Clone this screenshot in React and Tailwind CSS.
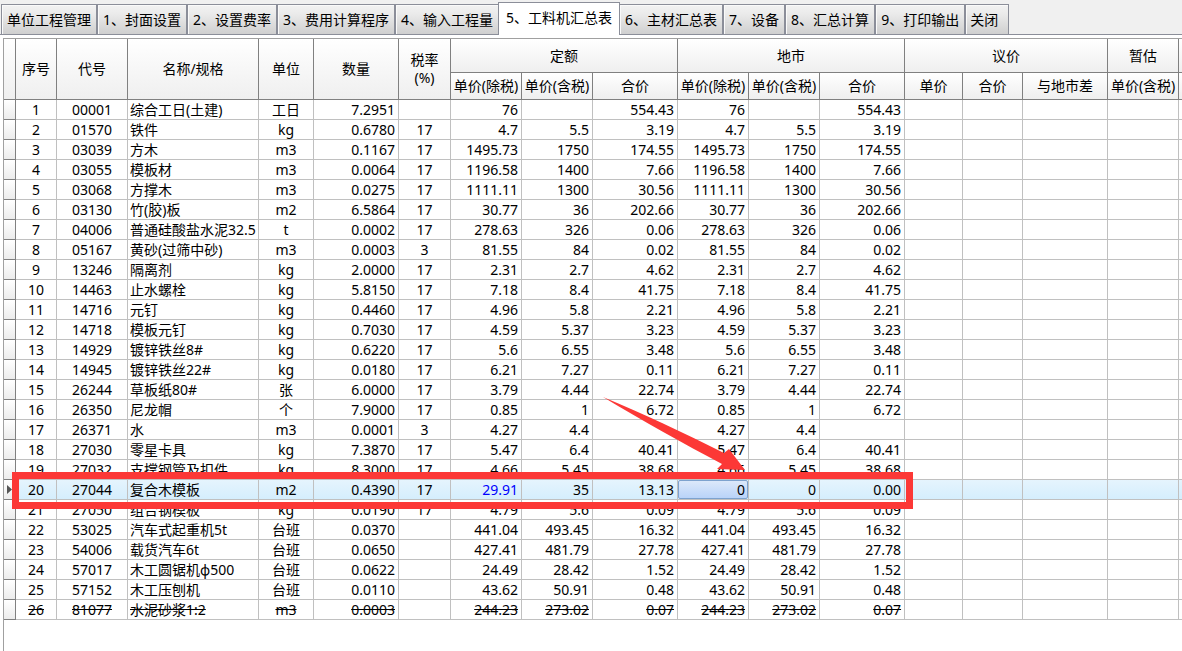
import clsx from "clsx";

const tabs = [
    "单位工程管理",
    "1、封面设置",
    "2、设置费率",
    "3、费用计算程序",
    "4、输入工程量",
    "5、工料机汇总表",
    "6、主材汇总表",
    "7、设备",
    "8、汇总计算",
    "9、打印输出",
    "关闭",
];

const activeTab = "5、工料机汇总表";

const columns = [
    { key: "no", width: "w-[41px]", align: "text-center" },
    { key: "code", width: "w-[71px]", align: "text-center" },
    { key: "name", width: "w-[131px]", align: "text-left" },
    { key: "unit", width: "w-[55px]", align: "text-center" },
    { key: "qty", width: "w-[85px]", align: "text-right" },
    { key: "tax", width: "w-[52px]", align: "text-center" },
    { key: "quotaNet", width: "w-[71px]", align: "text-right" },
    { key: "quotaGross", width: "w-[71px]", align: "text-right" },
    { key: "quotaTotal", width: "w-[85px]", align: "text-right" },
    { key: "cityNet", width: "w-[71px]", align: "text-right" },
    { key: "cityGross", width: "w-[71px]", align: "text-right" },
    { key: "cityTotal", width: "w-[85px]", align: "text-right" },
    { key: "dealPrice", width: "w-[58px]", align: "text-right" },
    { key: "dealTotal", width: "w-[60px]", align: "text-right" },
    { key: "cityDiff", width: "w-[85px]", align: "text-right" },
    { key: "estGross", width: "w-[71px]", align: "text-right" },
    { key: "rest", width: "", align: "text-center" },
];

// code, name, unit, qty, tax, net price, gross price, total
const materials = [
    ["00001", "综合工日(土建)", "工日", "7.2951", "", "76", "", "554.43"],
    ["01570", "铁件", "kg", "0.6780", "17", "4.7", "5.5", "3.19"],
    ["03039", "方木", "m3", "0.1167", "17", "1495.73", "1750", "174.55"],
    ["03055", "模板材", "m3", "0.0064", "17", "1196.58", "1400", "7.66"],
    ["03068", "方撑木", "m3", "0.0275", "17", "1111.11", "1300", "30.56"],
    ["03130", "竹(胶)板", "m2", "6.5864", "17", "30.77", "36", "202.66"],
    ["04006", "普通硅酸盐水泥32.5", "t", "0.0002", "17", "278.63", "326", "0.06"],
    ["05167", "黄砂(过筛中砂)", "m3", "0.0003", "3", "81.55", "84", "0.02"],
    ["13246", "隔离剂", "kg", "2.0000", "17", "2.31", "2.7", "4.62"],
    ["14463", "止水螺栓", "kg", "5.8150", "17", "7.18", "8.4", "41.75"],
    ["14716", "元钉", "kg", "0.4460", "17", "4.96", "5.8", "2.21"],
    ["14718", "模板元钉", "kg", "0.7030", "17", "4.59", "5.37", "3.23"],
    ["14929", "镀锌铁丝8#", "kg", "0.6220", "17", "5.6", "6.55", "3.48"],
    ["14945", "镀锌铁丝22#", "kg", "0.0180", "17", "6.21", "7.27", "0.11"],
    ["26244", "草板纸80#", "张", "6.0000", "17", "3.79", "4.44", "22.74"],
    ["26350", "尼龙帽", "个", "7.9000", "17", "0.85", "1", "6.72"],
    ["26371", "水", "m3", "0.0001", "3", "4.27", "4.4", ""],
    ["27030", "零星卡具", "kg", "7.3870", "17", "5.47", "6.4", "40.41"],
    ["27032", "支撑钢管及扣件", "kg", "8.3000", "17", "4.66", "5.45", "38.68"],
    ["27044", "复合木模板", "m2", "0.4390", "17", "29.91", "35", "13.13"],
    ["27050", "组合钢模板", "kg", "0.0190", "17", "4.79", "5.6", "0.09"],
    ["53025", "汽车式起重机5t", "台班", "0.0370", "", "441.04", "493.45", "16.32"],
    ["54006", "载货汽车6t", "台班", "0.0650", "", "427.41", "481.79", "27.78"],
    ["57017", "木工圆锯机φ500", "台班", "0.0622", "", "24.49", "28.42", "1.52"],
    ["57152", "木工压刨机", "台班", "0.0110", "", "43.62", "50.91", "0.48"],
    ["81077", "水泥砂浆1:2", "m3", "0.0003", "", "244.23", "273.02", "0.07"],
];

const rows = materials.map(([code, name, unit, qty, tax, net, gross, total], i) => {
    const selected = code === "27044";
    return {
        no: i + 1,
        code,
        name,
        unit,
        qty,
        tax,
        quotaNet: net,
        quotaGross: gross,
        quotaTotal: total,
        cityNet: selected ? "0" : net,
        cityGross: selected ? "0" : gross,
        cityTotal: selected ? "0.00" : total,
        selected,
        removed: code === "81077",
    };
});

function TabBar() {
    return (
        <nav className="flex h-[35px] items-end border-b border-[#8b8e99] bg-[#f0f0f0] pl-px">
            {tabs.map((tab) => {
                const active = tab === activeTab;
                return (
                    <button
                        key={tab}
                        type="button"
                        className={clsx(
                            "shrink-0 border-x border-t border-[#8b8e99] whitespace-nowrap text-left",
                            active
                                ? "relative -mx-px -mb-px h-[33px] bg-white px-[7px] pb-1"
                                : "h-[30px] bg-linear-to-b from-[#f2f2f2] from-0% via-[#ebebeb] via-30% to-[#cfcfcf] shadow-[inset_1px_1px_0_#fafafa]",
                            !active && (tab === "关闭" ? "pr-[10px] pl-1" : "px-[5px]")
                        )}
                    >
                        {tab}
                    </button>
                );
            })}
        </nav>
    );
}

function HeadCell({ children, ...props }) {
    return (
        <th
            className="border-r border-b border-[#808080] bg-linear-to-b from-white to-[#efefef] p-0 text-center font-normal whitespace-nowrap last:border-r-0"
            {...props}
        >
            {children}
        </th>
    );
}

function TableHead() {
    return (
        <thead className="leading-[18px]">
            <tr className="h-[34px]">
                <HeadCell rowSpan={2} />
                <HeadCell rowSpan={2}>序号</HeadCell>
                <HeadCell rowSpan={2}>代号</HeadCell>
                <HeadCell rowSpan={2}>名称/规格</HeadCell>
                <HeadCell rowSpan={2}>单位</HeadCell>
                <HeadCell rowSpan={2}>数量</HeadCell>
                <HeadCell rowSpan={2}>
                    税率
                    <br />
                    (%)
                </HeadCell>
                <HeadCell colSpan={3}>定额</HeadCell>
                <HeadCell colSpan={3}>地市</HeadCell>
                <HeadCell colSpan={3}>议价</HeadCell>
                <HeadCell>暂估</HeadCell>
                <HeadCell />
            </tr>
            <tr className="h-[27px]">
                <HeadCell>单价(除税)</HeadCell>
                <HeadCell>单价(含税)</HeadCell>
                <HeadCell>合价</HeadCell>
                <HeadCell>单价(除税)</HeadCell>
                <HeadCell>单价(含税)</HeadCell>
                <HeadCell>合价</HeadCell>
                <HeadCell>单价</HeadCell>
                <HeadCell>合价</HeadCell>
                <HeadCell>与地市差</HeadCell>
                <HeadCell>单价(含税)</HeadCell>
                <HeadCell />
            </tr>
        </thead>
    );
}

function MaterialRow({ row }) {
    return (
        <tr className={clsx("h-5", row.removed && "line-through")}>
            <td className="border-r border-b border-[#808080] bg-linear-to-b from-white to-[#ececec] p-0">
                {row.selected && (
                    <svg viewBox="0 0 5 9" className="ml-[3px] h-[9px] w-[5px]" aria-hidden="true">
                        <path d="M0 0 L5 4.5 L0 9 Z" fill="#555" />
                    </svg>
                )}
            </td>
            {columns.map(({ key, align }) => {
                const focused = row.selected && key === "cityNet";
                return (
                    <td
                        key={key}
                        className={clsx(
                            "border-r border-b border-[#c0c0c0] py-0 whitespace-nowrap last:border-r-0",
                            align,
                            row.selected && "bg-linear-to-b from-[#e5f4fd] to-[#d5eefd]",
                            row.selected && key === "quotaNet" && "text-[#0000ff]",
                            focused || align === "text-center" ? "px-0" : "pr-[3px] pl-0.5"
                        )}
                    >
                        {focused ? (
                            <div className="rounded-xs border border-[#7da2ce] bg-linear-to-b from-[#dce8fa] to-[#b9d3f8] px-0.5 leading-[17px]">
                                {row[key]}
                            </div>
                        ) : (
                            row[key]
                        )}
                    </td>
                );
            })}
        </tr>
    );
}

function Annotation() {
    return (
        <>
            <div className="pointer-events-none absolute top-[433px] left-2 h-[37px] w-[901px] border-[7px] border-[#fc3836]" />
            <svg
                viewBox="0 0 144 76"
                className="pointer-events-none absolute top-[357px] left-[598px] h-[76px] w-[144px]"
                aria-hidden="true"
            >
                <path
                    d="M1 1 C40 17 82 37 122 57 L127 53 L143 74 L115 73 L120 68 C82 48 41 25 1 1 Z"
                    fill="#fc3836"
                />
            </svg>
        </>
    );
}

export default function App() {
    return (
        <div className="flex min-h-screen flex-col overflow-hidden bg-white font-['Noto_Sans','Noto_Sans_CJK_SC',sans-serif] text-sm leading-[19px] text-black">
            <TabBar />
            <main className="relative mt-[3px] ml-[3px] grow border-t border-l border-[#a0a0a0]">
                <table className="w-full table-fixed border-separate border-spacing-0">
                    <colgroup>
                        <col className="w-3" />
                        {columns.map(({ key, width }) => (
                            <col key={key} className={width} />
                        ))}
                    </colgroup>
                    <TableHead />
                    <tbody>
                        {rows.map((row) => (
                            <MaterialRow key={row.code} row={row} />
                        ))}
                    </tbody>
                </table>
                <Annotation />
            </main>
        </div>
    );
}
